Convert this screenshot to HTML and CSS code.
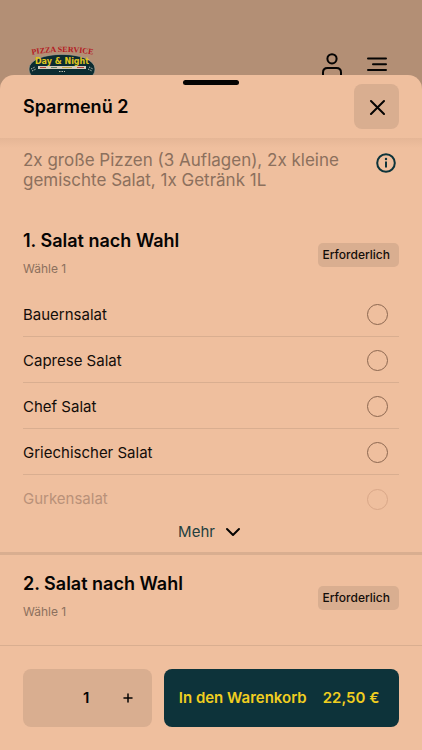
FILE: index.html
```html
<!DOCTYPE html>
<html lang="de">
<head>
<meta charset="utf-8">
<meta name="viewport" content="width=device-width, initial-scale=1">
<title>Sparmenü 2</title>
<link rel="stylesheet" href="styles.css">
</head>
<body>
<header class="topbar">
  <svg class="logo" viewBox="0 0 70 40" role="img" aria-label="Pizza Service Day &amp; Night">
    <path id="arc" d="M3 11 Q35 5 68 11" fill="none"/>
    <text class="logo-arc"><textPath href="#arc" startOffset="50%" text-anchor="middle">PIZZA SERVICE</textPath></text>
    <path d="M30 31H65V40H30Z" fill="#b5121b"/>
    <path d="M2 25C2 5.500 68 5.500 68 25C68 28 67 30 65 32L50 33Q35 36 20 34L5 32C3 30 2 28 2 25Z" fill="#0b2c31" stroke="#a9a294" stroke-width="0.7"/>
    <text class="logo-name" x="35" y="20" text-anchor="middle">Day &amp; Night</text>
    <path d="M11 22H59V25H11Z" fill="#d6cbbb"/>
    <path d="M13 23.500H19M50 23.500H57" stroke="#b5473b"/>
    <path d="M24 23.500H30" stroke="#638064"/>
    <path d="M35 23.500H45" stroke="#bda544"/>
    <path d="M4 25L8 23M5 27L9 25M62 23L66 25M61 25L65 27M32 27.500H38" stroke="#b9b9ad" stroke-width="1" stroke-dasharray="1.500 1"/>
  </svg>
  <nav class="topbar-actions">
    <button class="icon-button" aria-label="Konto">
      <svg width="24" height="26" viewBox="0 0 24 26" fill="none" stroke="#050403" stroke-width="2" stroke-linecap="round"><circle cx="12" cy="6.800" r="4.600"/><path d="M3 24V20.500C3 17.700 4.700 16 7.500 16H16.500C19.300 16 21 17.700 21 20.500V24"/></svg>
    </button>
    <button class="icon-button" aria-label="Menü">
      <svg width="24" height="26" viewBox="0 0 24 26" fill="none" stroke="#050403" stroke-width="2" stroke-linecap="round"><path d="M3 6.500H21M8 12.200H21M3 18H21"/></svg>
    </button>
  </nav>
</header>

<main class="sheet">
  <header class="sheet-head">
    <span class="handle"></span>
    <h1>Sparmenü 2</h1>
    <button class="close" aria-label="Schließen">
      <svg width="16" height="16" viewBox="0 0 16 16" fill="none" stroke="#050403" stroke-width="2" stroke-linecap="round"><path d="M2 2L15 15M15 2L2 15"/></svg>
    </button>
  </header>

  <div class="sheet-body">
    <div class="intro">
      <p>2x große Pizzen (3 Auflagen), 2x kleine gemischte Salat, 1x Getränk 1L</p>
      <button class="info" aria-label="Informationen">
        <svg width="20" height="20" viewBox="0 0 20 20" fill="none" stroke="#0d333a" stroke-width="2"><circle cx="10" cy="10" r="8.800"/><path d="M10 8.500V14.500"/><circle cx="10" cy="6" r="1.200" fill="#0d333a" stroke="none"/></svg>
      </button>
    </div>

    <section class="group">
      <div class="group-head">
        <div>
          <h2>1. Salat nach Wahl</h2>
          <p class="hint">Wähle 1</p>
        </div>
        <span class="badge">Erforderlich</span>
      </div>
      <div class="options">
        <label class="option">Bauernsalat<input type="radio" name="salat1"></label>
        <label class="option">Caprese Salat<input type="radio" name="salat1"></label>
        <label class="option">Chef Salat<input type="radio" name="salat1"></label>
        <label class="option">Griechischer Salat<input type="radio" name="salat1"></label>
        <label class="option faded">Gurkensalat<input type="radio" name="salat1"></label>
      </div>
      <button class="more">Mehr
        <svg width="16" height="10" viewBox="0 0 16 10" fill="none" stroke="#050403" stroke-width="2" stroke-linecap="round" stroke-linejoin="round"><path d="M2 2L8 8L14 2"/></svg>
      </button>
    </section>

    <section class="group">
      <div class="group-head">
        <div>
          <h2>2. Salat nach Wahl</h2>
          <p class="hint">Wähle 1</p>
        </div>
        <span class="badge">Erforderlich</span>
      </div>
    </section>
  </div>

  <footer class="order">
    <div class="stepper">
      <input type="text" inputmode="numeric" value="1" aria-label="Menge">
      <button aria-label="Menge erhöhen">
        <svg width="10" height="10" viewBox="0 0 10 10" stroke="#050403" stroke-width="1.500" stroke-linecap="round"><path d="M1 5H9M5 1V9"/></svg>
      </button>
    </div>
    <button class="add"><span>In den Warenkorb</span><span>22,50 €</span></button>
  </footer>
</main>
</body>
</html>
```
FILE: styles.css
```css
* {
  box-sizing: border-box;
}

body {
  margin: 0;
  min-height: 100vh;
  display: flex;
  flex-direction: column;
  background: #b38f75;
  color: #130d09;
  font-family: Inter, "Liberation Sans", sans-serif;
  font-size: 15px;
  line-height: 20px;
}

h1, h2, p {
  margin: 0;
}

button, input {
  font: inherit;
  color: inherit;
}

button {
  display: flex;
  align-items: center;
  justify-content: center;
  margin: 0;
  padding: 0;
  border: 0;
  background: none;
  cursor: pointer;
}

.topbar {
  height: 75px;
  display: flex;
  align-items: flex-start;
  justify-content: space-between;
  padding: 44px 33px 0 27px;
}

.logo {
  width: 70px;
  height: 40px;
}

.logo-arc {
  fill: #b3191f;
  font: bold 8px "Liberation Serif", serif;
}

.logo-name {
  fill: #e0c51f;
  font: bold 8px "DejaVu Sans", sans-serif;
}

.topbar-actions {
  display: flex;
  gap: 21px;
  padding-top: 8px;
}

.sheet {
  position: relative;
  flex: 1;
  display: flex;
  flex-direction: column;
  border-radius: 14px 14px 0 0;
  background: #efbf9e;
}

.sheet-head {
  position: relative;
  display: flex;
  align-items: center;
  justify-content: space-between;
  padding: 9px 23px;
}

.handle {
  position: absolute;
  top: 5px;
  left: 50%;
  width: 56px;
  height: 5px;
  margin-left: -28px;
  border-radius: 3px;
  background: #050403;
}

h1, h2 {
  color: #050403;
  font-size: 18px;
  font-weight: 600;
  line-height: 24px;
}

.close {
  width: 45px;
  height: 45px;
  border-radius: 8px;
  background: #d9ae90;
}

.sheet-body {
  flex: 1;
  background: linear-gradient(#e5b696, #efbf9e 10px);
}

.intro {
  display: flex;
  align-items: flex-start;
  justify-content: space-between;
  gap: 24px;
  padding: 12px 26px 22px 23px;
  color: #8c705d;
  font-size: 17px;
}

.info {
  flex: none;
  padding-top: 3px;
}

.group {
  padding: 17px 23px 0;
}

.group + .group {
  border-top: 3px solid #d9ae90;
}

.group-head {
  display: flex;
  align-items: flex-start;
  justify-content: space-between;
  padding-bottom: 13px;
}

.hint {
  margin-top: 7px;
  color: #8c705d;
  font-size: 12px;
  line-height: 18px;
}

.badge {
  margin-top: 14px;
  padding: 0 9px 0 5px;
  border-radius: 5px;
  background: #d9ae90;
  font-size: 12px;
  font-weight: 500;
  line-height: 24px;
}

.option {
  display: flex;
  align-items: center;
  justify-content: space-between;
  height: 46px;
  padding: 2px 11px 0 0;
  border-bottom: 1px solid #d9ae90;
}

.option input {
  appearance: none;
  width: 21px;
  height: 21px;
  margin: 0;
  border: 1px solid #8c6750;
  border-radius: 50%;
}

.faded {
  border-bottom: 0;
  color: #b99179;
}

.faded input {
  border-color: #d9a788;
}

.more {
  width: 100%;
  gap: 10px;
  padding: 1px 3px 10px 0;
  color: #24403f;
}

.order {
  display: grid;
  grid-template-columns: 11fr 20fr;
  gap: 12px;
  padding: 23px;
  border-top: 1px solid #d9ae90;
}

.stepper {
  display: grid;
  grid-template-columns: repeat(3, 1fr);
  height: 58px;
  padding-right: 3px;
  border-radius: 8px;
  background: #d9ae90;
}

.stepper input {
  grid-column: 2;
  width: 100%;
  padding: 0;
  border: 0;
  background: none;
  color: #050403;
  font-weight: 600;
  text-align: center;
}

.add {
  gap: 16px;
  padding-right: 5px;
  border-radius: 8px;
  background: #0d333a;
  color: #f0ce20;
  font-weight: 600;
}
```
